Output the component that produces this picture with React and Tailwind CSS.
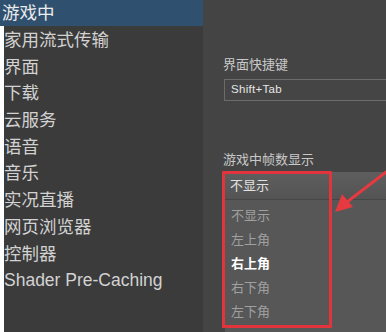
import React from 'react';

const items = ['家用流式传输', '界面', '下载', '云服务', '语音', '音乐', '实况直播', '网页浏览器', '控制器', 'Shader Pre-Caching'];

const options = [
  { label: '不显示', active: false },
  { label: '左上角', active: false },
  { label: '右上角', active: true },
  { label: '右下角', active: false },
  { label: '左下角', active: false },
];

const cjk = { fontFamily: '"Liberation Sans", "Noto Sans CJK SC", sans-serif' };

export default function App() {
  return (
    <div className="relative flex w-[386px] h-[332px] overflow-hidden bg-white" style={cjk}>
      {/* Sidebar */}
      <div className="w-[203px] flex flex-col flex-shrink-0">
        <div className="h-[26px] bg-[#30506f] text-[#ececec] text-[17.5px] leading-[26px] pl-[2px]">游戏中</div>
        <div className="flex-1 border-l-[4px] border-white bg-[#3b3b3b] pt-[1px]">
          {items.map(it => (
            <div key={it} className="h-[26.7px] leading-[26.7px] text-[17.5px] text-[#d2d2d2] whitespace-nowrap">{it}</div>
          ))}
        </div>
      </div>

      {/* Settings pane */}
      <div className="flex-1 bg-[#444444] pl-[20px] flex flex-col">
        <p className="mt-[57px] text-[13px] leading-[16px] text-[#c9c9c9]">界面快捷键</p>
        <div className="mt-[6px] ml-[1px] h-[24px] w-[200px] border border-[#6b6b6b] bg-[#454545] pl-[6px] flex items-center">
          <span className="text-[11.5px] font-medium tracking-[0.3px] text-[#e6e6e6]">Shift+Tab</span>
        </div>

        <p className="mt-[51px] text-[13px] leading-[16px] text-[#c9c9c9]">游戏中帧数显示</p>
        <div className="mt-[4px] ml-[2px] w-[200px] flex flex-col">
          <div className="h-[27px] bg-gradient-to-b from-[#5e5e5e] to-[#545454] flex items-center pl-[5px]">
            <span className="text-[13px] text-[#e2e2e2]">不显示</span>
          </div>
          <div className="h-px bg-[#464646]" />
          <div className="bg-[#575757] pt-[4px] pb-[8px]">
            {options.map(o => (
              <div
                key={o.label}
                className={`h-[24px] leading-[24px] pl-[6px] text-[13px] ${o.active ? 'text-white font-semibold' : 'text-[#a0a0a0]'}`}
              >
                {o.label}
              </div>
            ))}
          </div>
        </div>
      </div>

      {/* Annotation */}
      <div className="absolute left-[222px] top-[171px] w-[110px] h-[157px] border-[3px] border-[#e2343d] rounded-[1px]" />
      <svg className="absolute left-0 top-0" width="386" height="332" viewBox="0 0 386 332">
        <line x1="390" y1="169" x2="343" y2="205" stroke="#e63a40" strokeWidth="3" />
        <polygon points="335,212 342,194 353,207" fill="#e63a40" />
      </svg>
    </div>
  );
}
